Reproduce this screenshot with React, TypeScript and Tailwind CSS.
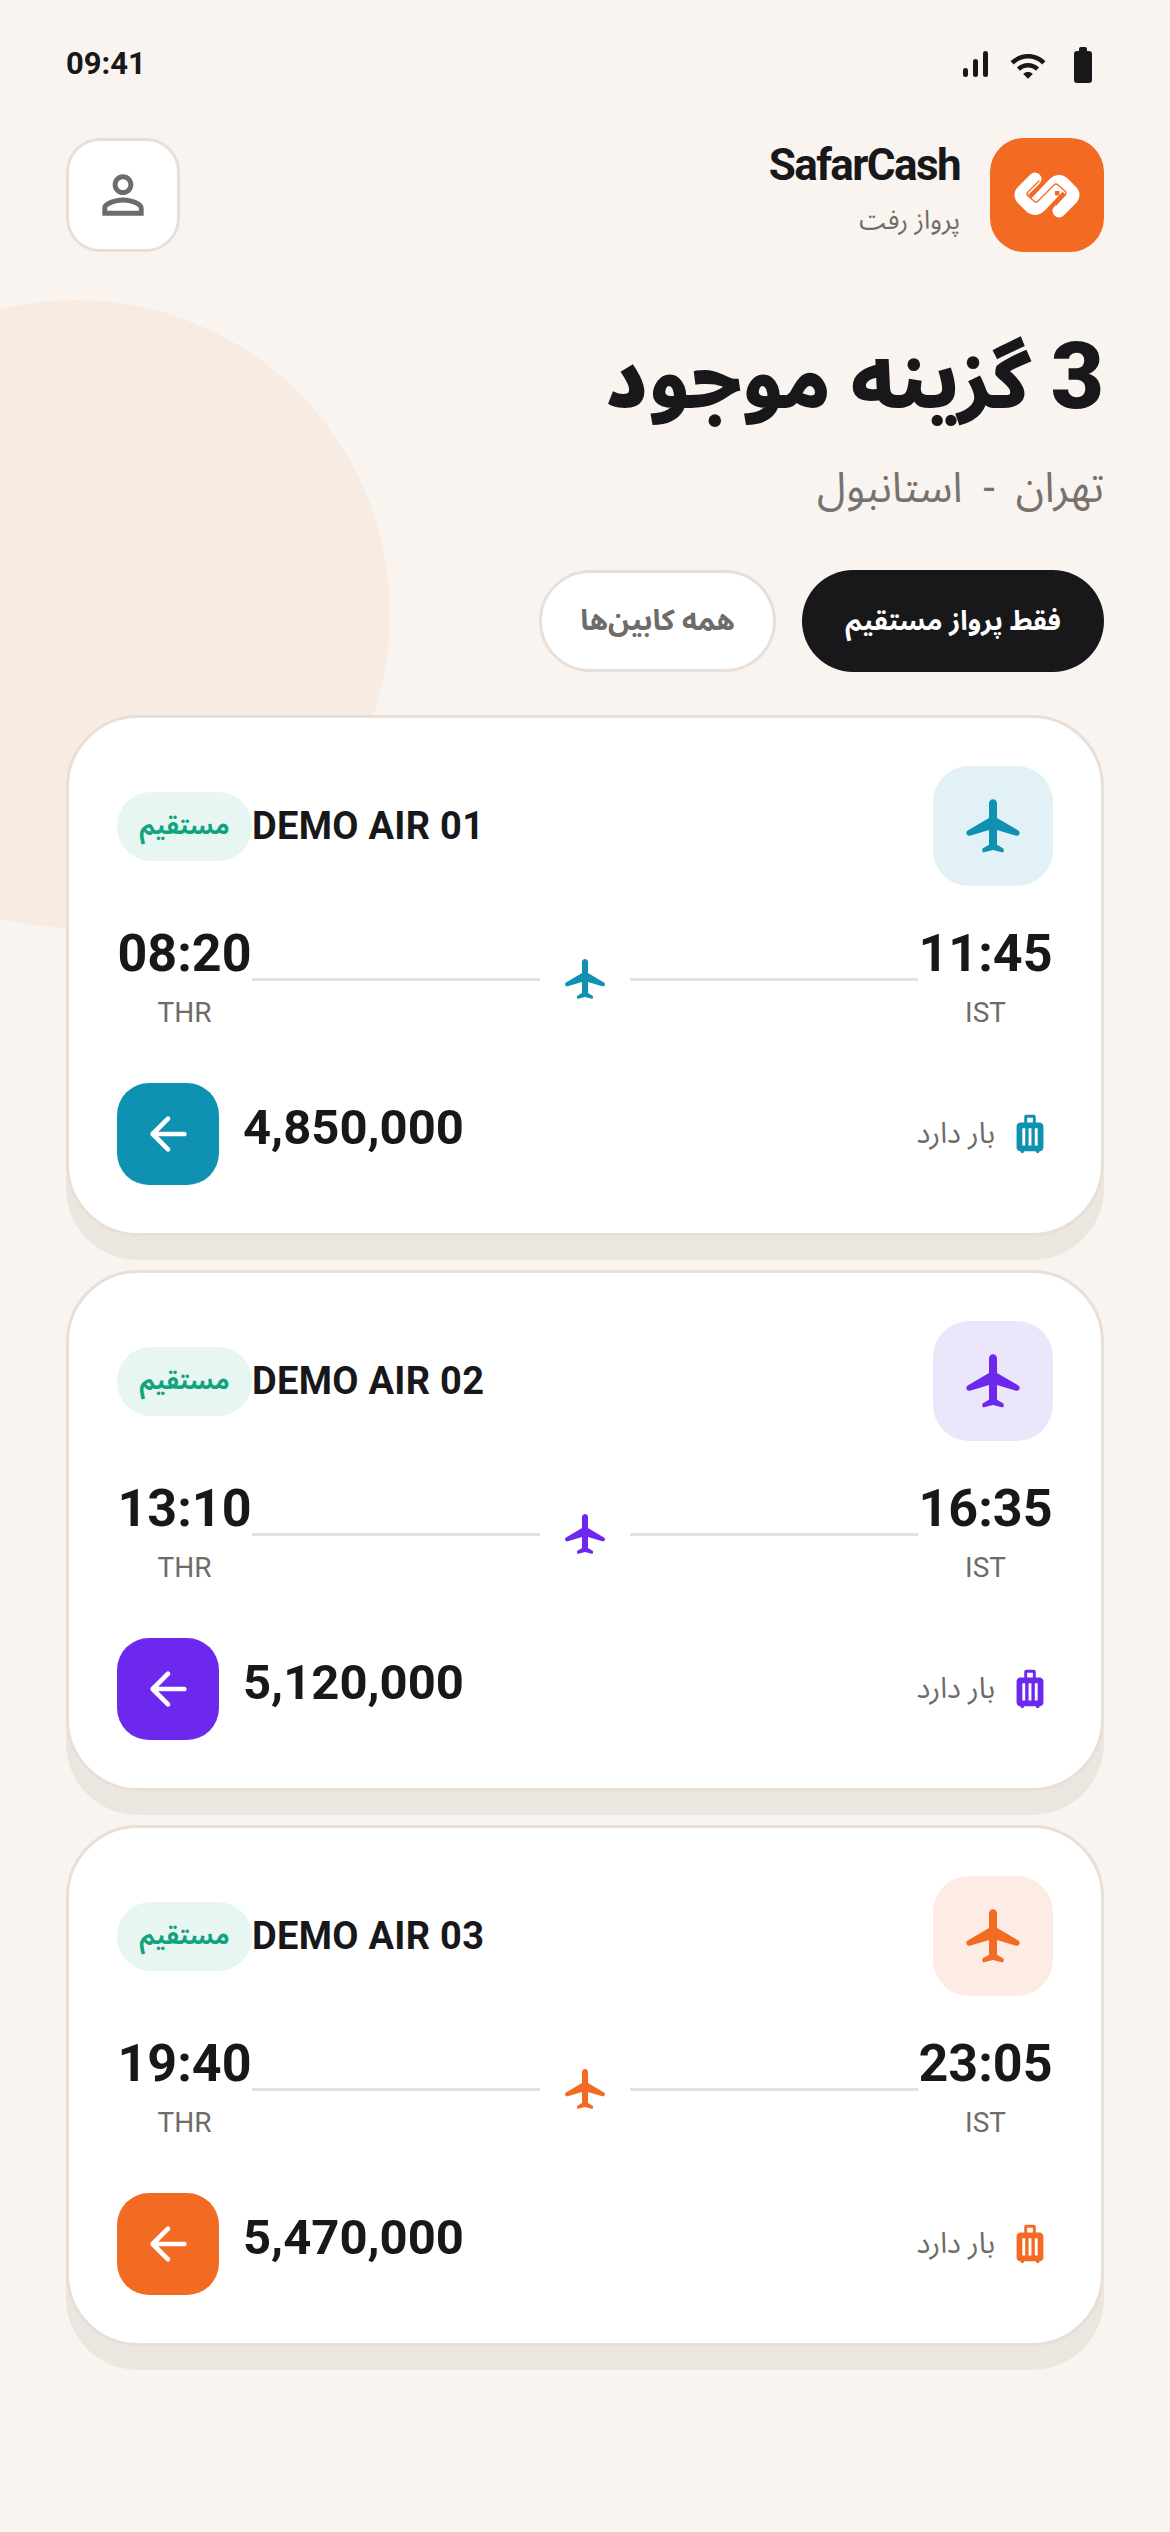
import React from "react";

const FONT = "font-['Roboto','Noto_Sans_Arabic','Noto_Sans','DejaVu_Sans',sans-serif]";

const PLANE = "M21.48 13.7 13.5 9V3.5C13.5 2.67 12.83 2 12 2s-1.5.67-1.5 1.5V9l-7.98 4.7c-.32.18-.52.53-.52.9 0 .7.67 1.2 1.34 1.01l7.16-2.11V19l-2.26 1.35c-.15.09-.24.26-.24.43v.58c0 .33.31.57.62.49L12 21l3.38.85c.32.08.62-.16.62-.49v-.58c0-.18-.09-.34-.24-.43L13.5 19v-5.5l7.16 2.11c.67.2 1.34-.3 1.34-1.01 0-.37-.2-.72-.52-.9z";
const LUGGAGE = "M17 6h-2V3c0-.55-.45-1-1-1h-4c-.55 0-1 .45-1 1v3H7c-1.1 0-2 .9-2 2v11c0 1.1.9 2 2 2 0 .55.45 1 1 1s1-.45 1-1h6c0 .55.45 1 1 1s1-.45 1-1c1.1 0 2-.9 2-2V8c0-1.1-.9-2-2-2zM9.5 18H8V9h1.5v9zm3.25 0h-1.5V9h1.5v9zm.75-12h-3V3.5h3V6zM16 18h-1.5V9H16v9z";
const ARROW = "M19 11H7.83l4.88-4.88c.39-.39.39-1.03 0-1.42-.39-.39-1.02-.39-1.41 0l-6.59 6.59c-.39.39-.39 1.02 0 1.41l6.59 6.59c.39.39 1.02.39 1.41 0 .39-.39.39-1.02 0-1.41L7.83 13H19c.55 0 1-.45 1-1s-.45-1-1-1z";
const PERSON = "M12 5.9c1.16 0 2.1.94 2.1 2.1s-.94 2.1-2.1 2.1S9.9 9.16 9.9 8s.94-2.1 2.1-2.1m0 9c2.97 0 6.1 1.46 6.1 2.1v1.1H5.9V17c0-.64 3.13-2.1 6.1-2.1M12 4C9.79 4 8 5.79 8 8s1.79 4 4 4 4-1.79 4-4-1.79-4-4-4zm0 9c-2.67 0-8 1.34-8 4v3h16v-3c0-2.66-5.33-4-8-4z";
const WIFI = "M1 9l2 2c4.97-4.97 13.03-4.97 18 0l2-2C16.93 2.93 7.08 2.93 1 9zm8 8l3 3 3-3c-1.65-1.66-4.34-1.66-6 0zm-4-4l2 2c2.76-2.76 7.24-2.76 10 0l2-2C15.14 9.14 8.87 9.14 5 13z";

function Icon({ d, className }: { d: string; className: string }) {
  return (
    <svg viewBox="0 0 24 24" fill="currentColor" className={className}>
      <path d={d} />
    </svg>
  );
}

function Logo() {
  return (
    <svg viewBox="0 0 66 48" className="h-[48px] w-[66px]" fill="none" strokeLinecap="round" strokeLinejoin="round">
      <path d="M21 8 L9 20 Q5 24 9 28 L16 35 Q21 40 26 35 L46 14" stroke="#fff" strokeWidth="13" />
      <path d="M45 40 L57 28 Q61 24 57 20 L50 13 Q45 8 40 13 L20 34" stroke="#fff" strokeWidth="13" />
      <path d="M25 10 L14 21 Q12 23 14 25 L20 30 Q22 32 24 30 L40 14 Q42 12 44 14 L51 20 Q53 22 51 24 L42 34" stroke="#f36b22" strokeWidth="1.3" />
      <rect x="41" y="20" width="4.5" height="4.5" fill="#f36b22" />
    </svg>
  );
}

const flights = [
  { name: "DEMO AIR 01", dep: "08:20", arr: "11:45", price: "4,850,000", color: "text-[#0f92b2]", bg: "bg-[#0f92b2]", soft: "bg-[#e1f1f6]" },
  { name: "DEMO AIR 02", dep: "13:10", arr: "16:35", price: "5,120,000", color: "text-[#6d28ee]", bg: "bg-[#6d28ee]", soft: "bg-[#ece6fb]" },
  { name: "DEMO AIR 03", dep: "19:40", arr: "23:05", price: "5,470,000", color: "text-[#f36b22]", bg: "bg-[#f36b22]", soft: "bg-[#fdece3]" },
];

function TimeBlock({ time, code }: { time: string; code: string }) {
  return (
    <div className="flex w-[135px] shrink-0 flex-col items-center pb-[5px]">
      <div className="h-[64px] text-[52px] leading-[64px] font-bold text-[#18181a]">{time}</div>
      <div className="mt-[9px] h-[36px] text-[28px] leading-[36px] text-[#6f6b68]">{code}</div>
    </div>
  );
}

function Card({ f }: { f: (typeof flights)[number] }) {
  return (
    <div className="rounded-[72px] border-[3px] border-[#e8e0d8] bg-white p-[48px] shadow-[0_24px_0_0_#ebe6df]">
      <div className="flex h-[120px] items-center justify-between">
        <div className={`flex h-[120px] w-[120px] items-center justify-center rounded-[36px] ${f.soft} ${f.color}`}>
          <Icon d={PLANE} className="h-[64px] w-[64px]" />
        </div>
        <div className="flex items-center">
          <span dir="ltr" className="text-[38px] leading-[46px] font-bold tracking-[0.3px] text-[#18181a]">{f.name}</span>
          <span className="flex h-[69px] w-[135px] items-center justify-center rounded-[34px] bg-[#e7f6f0] text-[25px] font-bold text-[#10a37f]">مستقیم</span>
        </div>
      </div>
      <div className="mt-[36px] flex items-center" dir="ltr">
        <TimeBlock time={f.dep} code="THR" />
        <div className="flex flex-1 items-center">
          <div className="h-[3px] flex-1 bg-[#e8e0d8]" />
          <div className="flex w-[90px] justify-center">
            <Icon d={PLANE} className={`h-[48px] w-[48px] ${f.color}`} />
          </div>
          <div className="h-[3px] flex-1 bg-[#e8e0d8]" />
        </div>
        <TimeBlock time={f.arr} code="IST" />
      </div>
      <div className="mt-[47px] flex h-[102px] items-center justify-between">
        <div className="flex items-center gap-[12px]">
          <Icon d={LUGGAGE} className={`h-[46px] w-[46px] ${f.color}`} />
          <span className="text-[29px] text-[#6f6b68]">بار دارد</span>
        </div>
        <div className="flex items-center gap-[24px]" dir="ltr">
          <div className={`flex h-[102px] w-[102px] items-center justify-center rounded-[32px] text-white ${f.bg}`}>
            <Icon d={ARROW} className="h-[56px] w-[56px]" />
          </div>
          <span className="mb-[12px] text-[49px] leading-[60px] font-bold text-[#18181a]">{f.price}</span>
        </div>
      </div>
    </div>
  );
}

export default function App() {
  return (
    <div dir="rtl" className={`relative h-[2532px] w-[1170px] overflow-hidden bg-[#f9f4ef] ${FONT}`}>
      <div className="absolute top-[300px] left-[-238px] h-[628px] w-[628px] rounded-full bg-[#f8ebe1]" />
      <div className="relative px-[66px]">
        <div dir="ltr" className="flex h-[138px] items-start justify-between">
          <span className="mt-[45px] text-[31px] leading-[38px] font-bold text-[#18181a]">09:41</span>
          <div className="mt-[47px] mr-[12px] flex items-start">
            <svg viewBox="0 0 25 26" className="mt-[4px] h-[26px] w-[25px]" fill="#18181a">
              <rect x="0" y="17" width="5" height="9" rx="2.5" />
              <rect x="10" y="8" width="5" height="18" rx="2.5" />
              <rect x="20" y="0" width="5" height="26" rx="2.5" />
            </svg>
            <Icon d={WIFI} className="ml-[21px] h-[38px] w-[38px] text-[#18181a]" />
            <svg viewBox="0 0 18 36" className="ml-[27px] h-[36px] w-[18px]" fill="#18181a">
              <rect x="5" y="0" width="8" height="6" rx="2" />
              <rect x="0" y="4" width="18" height="32" rx="3" />
            </svg>
          </div>
        </div>
        <div className="flex h-[114px] items-center justify-between">
          <div className="flex items-center gap-[30px]">
            <div className="flex h-[114px] w-[114px] items-center justify-center rounded-[34px] bg-[#f36b22]">
              <Logo />
            </div>
            <div className="mb-[12px] flex flex-col">
              <span dir="ltr" className="text-right text-[44px] leading-[50px] font-bold tracking-[-1.6px] text-[#18181a]">SafarCash</span>
              <span className="mt-[12px] text-[26px] leading-[36px] text-[#6f6b68]">پرواز رفت</span>
            </div>
          </div>
          <div className="flex h-[114px] w-[114px] items-center justify-center rounded-[34px] border-[3px] border-[#e8e0d8] bg-white text-[#6f6b68]">
            <Icon d={PERSON} className="h-[62px] w-[62px]" />
          </div>
        </div>
        <h1 className="mt-[70px] text-[77px] leading-[110px] font-black text-[#18181a]">
          <span className="text-[92px]">3</span> گزینه موجود
        </h1>
        <p className="mt-[21px] text-[42px] leading-[60px] whitespace-pre text-[#77726d]">تهران  -  استانبول</p>
        <div className="mt-[52px] flex gap-[26px]">
          <div className="flex h-[102px] w-[302px] items-center justify-center rounded-full bg-[#18181a] text-[27px] font-bold text-white">فقط پرواز مستقیم</div>
          <div className="flex h-[102px] w-[237px] items-center justify-center rounded-full border-[3px] border-[#e8e0d8] bg-white text-[29px] font-bold text-[#6f6b68]">همه کابین‌ها</div>
        </div>
        <div className="mt-[43px] flex flex-col gap-[34px]">
          {flights.map((f) => (
            <Card key={f.name} f={f} />
          ))}
        </div>
      </div>
    </div>
  );
}
